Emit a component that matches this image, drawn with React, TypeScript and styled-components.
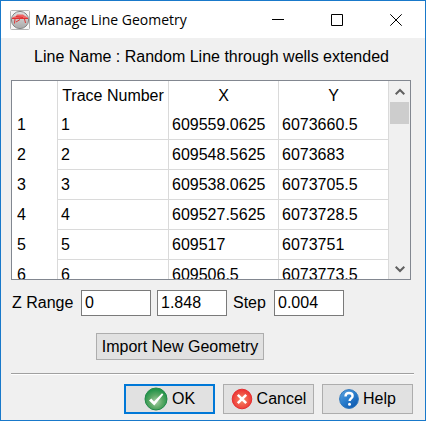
import React from "react";
import styled, { createGlobalStyle } from "styled-components";

const GlobalStyle = createGlobalStyle`
  * { box-sizing: border-box; }
  body { margin: 0; background: #f0f0f0; }
  button, input { font: inherit; color: inherit; }
`;

const Window = styled.main`
  display: flex;
  flex-direction: column;
  min-height: 100vh;
  border: 1px solid #1979ca;
  background: #f0f0f0;
  color: #000;
  font: 16px/20px "Liberation Sans", Arial, sans-serif;
`;

const TitleBar = styled.header`
  display: flex;
  align-items: center;
  height: 37px;
  padding-left: 9px;
  background: #fff;
`;

const Title = styled.h1`
  flex: 1;
  margin: 0 0 0 5px;
  font: 400 14px/20px "Open Sans", "Noto Sans", sans-serif;
  white-space: nowrap;
`;

const WindowButton = styled.button`
  display: flex;
  align-items: center;
  justify-content: center;
  flex: none;
  width: 43px;
  height: 36px;
  padding: 0;
  border: 0;
  background: transparent;
`;

const WindowButtons = styled.div`
  display: flex;
  gap: 16px;
  padding-right: 8px;

  ${WindowButton} {
    margin: 0;
  }
`;

const Body = styled.div`
  display: flex;
  flex-direction: column;
  flex: 1;
  padding: 9px 11px 6px 10px;
`;

const LineName = styled.p`
  margin: 0 0 13px;
  padding-right: 2px;
  text-align: center;
  white-space: nowrap;
`;

const TableFrame = styled.div`
  display: flex;
  height: 200px;
  margin-right: 3px;
  border: 1px solid #828790;
  background: #fff;
`;

const TableView = styled.div`
  flex: 1;
  min-width: 0;
  overflow: hidden;
`;

const Table = styled.table`
  width: 100%;
  table-layout: fixed;
  border-collapse: separate;
  border-spacing: 0;
`;

const Column = styled.col<{ $width?: number }>`
  width: ${(p) => (p.$width ? `${p.$width}px` : "auto")};
`;

const HeadCell = styled.th`
  height: 29px;
  padding: 0 3px;
  border-right: 1px solid #dadada;
  font-weight: 400;
  text-align: center;
  white-space: nowrap;
  overflow: hidden;
`;

const RowHead = styled.th`
  height: 30px;
  padding: 0 5px;
  border-right: 1px solid #dadada;
  font-weight: 400;
  text-align: left;
`;

const Cell = styled.td`
  height: 30px;
  padding: 0 3px;
  border-right: 1px solid #dadada;
  border-bottom: 1px solid #dadada;
`;

const ScrollBar = styled.div`
  display: flex;
  flex-direction: column;
  flex: none;
  width: 21px;
  padding: 0 1px;
  background: #f0f0f0;
`;

const ScrollButton = styled.button`
  display: flex;
  align-items: center;
  justify-content: center;
  height: 21px;
  padding: 0;
  border: 0;
  background: transparent;
`;

const ScrollTrack = styled.div`
  flex: 1;
`;

const ScrollThumb = styled.div`
  height: 22px;
  background: #cdcdcd;
`;

const RangeRow = styled.div`
  display: flex;
  align-items: center;
  gap: 6px;
  margin-top: 10px;
  padding-left: 1px;
`;

const Label = styled.label<{ $width: number }>`
  min-width: ${(p) => p.$width}px;
  white-space: nowrap;
`;

const NumberBox = styled.input`
  width: 70px;
  height: 26px;
  padding: 0 3px;
  border: 1px solid #7a7a7a;
  background: #fff;
`;

const ImportRow = styled.div`
  display: flex;
  padding: 17px 0 13px 85px;
`;

const Button = styled.button<{ $primary?: boolean }>`
  display: flex;
  align-items: center;
  justify-content: center;
  gap: 4px;
  padding: 0;
  border: ${(p) => (p.$primary ? "2px solid #0078d7" : "1px solid #adadad")};
  background: #e1e1e1;
  white-space: nowrap;
`;

const ImportButton = styled(Button)`
  width: 168px;
  height: 27px;
`;

const ActionButton = styled(Button)`
  width: 91px;
  height: 30px;
`;

const Actions = styled.footer`
  display: flex;
  justify-content: flex-end;
  gap: 8px;
  padding: 10px 1px 0 0;
  border-top: 1px solid #a0a0a0;
  box-shadow: inset 0 1px #fff;
`;

const AppIcon = () => (
  <svg width="20" height="20" viewBox="0 0 20 20" aria-hidden="true">
    <defs>
      <linearGradient id="app" x1="0" y1="0" x2="0" y2="1">
        <stop offset="0" stopColor="#e2e2e2" />
        <stop offset="1" stopColor="#a9a9a9" />
      </linearGradient>
    </defs>
    <rect x=".5" y=".5" width="19" height="19" rx="1" fill="#f6f6f6" stroke="#b4b4b4" />
    <circle cx="10" cy="10" r="8.6" fill="url(#app)" stroke="#858585" />
    <path d="M2 7.500 6 6l1-1.500h6l2 1.500 3 1.500-3 1.500H5z" fill="#ef6464" />
    <path d="M2 8.500h16M6 6.500l7 1M5 9l-.5 4.500M14.500 9l1 4M6 12l4-2.500" stroke="#df3232" fill="none" />
  </svg>
);

const OkIcon = () => (
  <svg width="24" height="24" viewBox="0 0 24 24" aria-hidden="true">
    <defs>
      <radialGradient id="ok" cx=".5" cy=".62" r=".55">
        <stop offset="0" stopColor="#a9cfa6" />
        <stop offset=".55" stopColor="#5aa765" />
        <stop offset="1" stopColor="#24944a" />
      </radialGradient>
    </defs>
    <circle cx="12" cy="12" r="11" fill="url(#ok)" stroke="#23894a" />
    <path d="m5 13.500 2.300-2 2.700 3L18 6.300l1.300 1.200L10.300 18.500z" fill="#fff" />
  </svg>
);

const CancelIcon = () => (
  <svg width="22" height="22" viewBox="0 0 22 22" aria-hidden="true">
    <defs>
      <radialGradient id="cancel" cx=".5" cy=".55" r=".55">
        <stop offset="0" stopColor="#f58a68" />
        <stop offset="1" stopColor="#ec3131" />
      </radialGradient>
    </defs>
    <circle cx="11" cy="11" r="9.800" fill="url(#cancel)" stroke="#e52f31" />
    <path d="m6.800 6.800 8.400 8.400m0-8.400-8.400 8.400" stroke="#fff" strokeWidth="2.600" />
  </svg>
);

const HelpIcon = () => (
  <svg width="20" height="20" viewBox="0 0 20 20" aria-hidden="true">
    <defs>
      <linearGradient id="help" x1="0" y1="0" x2=".8" y2="1">
        <stop offset="0" stopColor="#62a6df" />
        <stop offset=".5" stopColor="#2b7fce" />
        <stop offset="1" stopColor="#0d57ad" />
      </linearGradient>
    </defs>
    <circle cx="10" cy="10" r="9.400" fill="url(#help)" stroke="#2f78bd" />
    <path d="M6.500 7.500c0-2.500 1.500-3.500 3.500-3.500s3.600 1.100 3.600 3c0 2.300-3 2.500-3 5" fill="none" stroke="#fff" strokeWidth="2.400" />
    <circle cx="10.500" cy="15.200" r="1.500" fill="#fff" />
  </svg>
);

const rows = [
  ["609559.0625", "6073660.5"],
  ["609548.5625", "6073683"],
  ["609538.0625", "6073705.5"],
  ["609527.5625", "6073728.5"],
  ["609517", "6073751"],
  ["609506.5", "6073773.5"],
];

export default function App() {
  return (
    <>
      <GlobalStyle />
      <Window>
        <TitleBar>
          <AppIcon />
          <Title>Manage Line Geometry</Title>
          <WindowButtons>
            <WindowButton aria-label="Minimize">
              <svg width="12" height="12" viewBox="0 0 12 12"><path d="M0 5.500h12" stroke="#000" /></svg>
            </WindowButton>
            <WindowButton aria-label="Maximize">
              <svg width="12" height="12" viewBox="0 0 12 12"><path d="M.5.5h11v11H.5z" stroke="#000" fill="none" /></svg>
            </WindowButton>
            <WindowButton aria-label="Close">
              <svg width="12" height="12" viewBox="0 0 12 12"><path d="m.3.300 11.400 11.400m0-11.400L.3 11.700" stroke="#000" /></svg>
            </WindowButton>
          </WindowButtons>
        </TitleBar>
        <Body>
          <LineName>Line Name : Random Line through wells extended</LineName>
          <TableFrame>
            <TableView>
              <Table>
                <colgroup>
                  <Column $width={46} />
                  <Column $width={111} />
                  <Column />
                  <Column />
                </colgroup>
                <thead>
                  <tr>
                    <HeadCell aria-label="Row" />
                    <HeadCell scope="col">Trace Number</HeadCell>
                    <HeadCell scope="col">X</HeadCell>
                    <HeadCell scope="col">Y</HeadCell>
                  </tr>
                </thead>
                <tbody>
                  {rows.map(([x, y], i) => (
                    <tr key={x}>
                      <RowHead scope="row">{i + 1}</RowHead>
                      <Cell>{i + 1}</Cell>
                      <Cell>{x}</Cell>
                      <Cell>{y}</Cell>
                    </tr>
                  ))}
                </tbody>
              </Table>
            </TableView>
            <ScrollBar>
              <ScrollButton aria-label="Scroll up">
                <svg width="10" height="8" viewBox="0 0 10 8"><path d="m.7 6.300 4.300-4.300 4.300 4.300" stroke="#606060" strokeWidth="2" fill="none" /></svg>
              </ScrollButton>
              <ScrollTrack><ScrollThumb /></ScrollTrack>
              <ScrollButton aria-label="Scroll down">
                <svg width="10" height="8" viewBox="0 0 10 8"><path d="M.7 1.700 5 6l4.300-4.300" stroke="#606060" strokeWidth="2" fill="none" /></svg>
              </ScrollButton>
            </ScrollBar>
          </TableFrame>
          <RangeRow>
            <Label $width={63} htmlFor="z-start">Z Range</Label>
            <NumberBox id="z-start" defaultValue="0" />
            <NumberBox aria-label="Z range end" defaultValue="1.848" />
            <Label $width={35} htmlFor="z-step">Step</Label>
            <NumberBox id="z-step" defaultValue="0.004" />
          </RangeRow>
          <ImportRow>
            <ImportButton type="button">Import New Geometry</ImportButton>
          </ImportRow>
          <Actions>
            <ActionButton type="button" $primary><OkIcon />OK</ActionButton>
            <ActionButton type="button"><CancelIcon />Cancel</ActionButton>
            <ActionButton type="button"><HelpIcon />Help</ActionButton>
          </Actions>
        </Body>
      </Window>
    </>
  );
}
